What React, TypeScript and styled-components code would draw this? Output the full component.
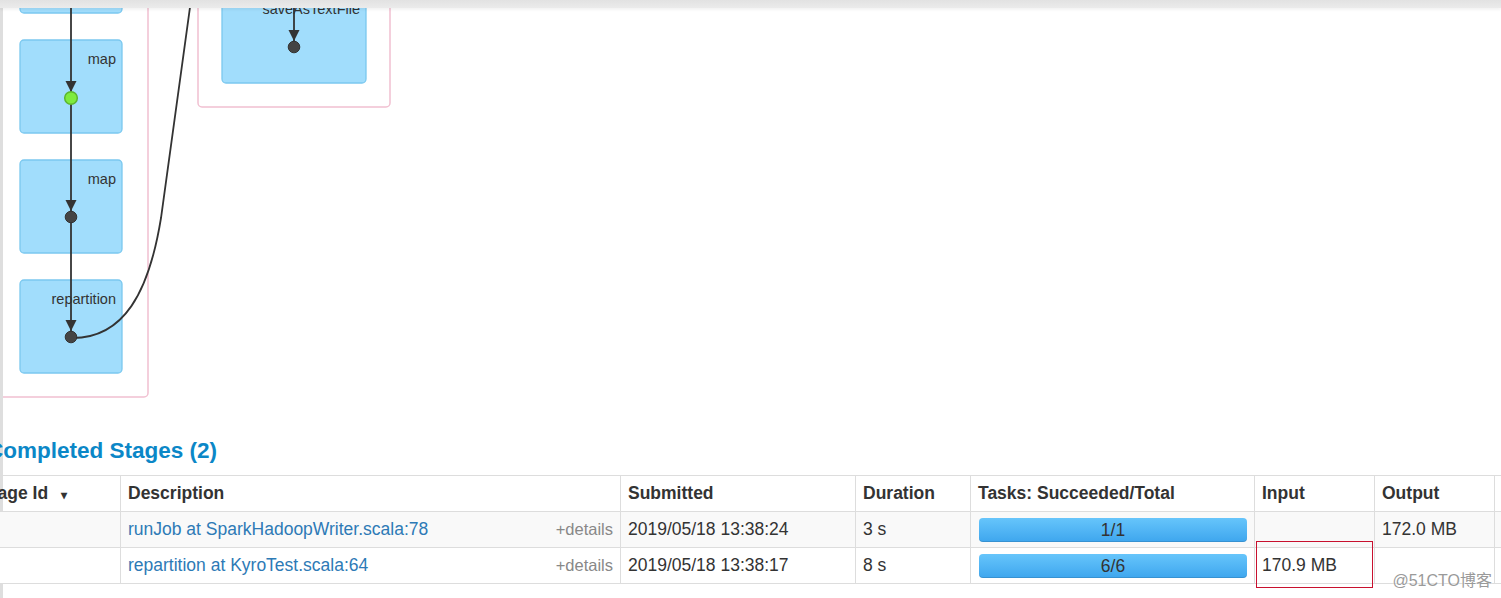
import React from "react"
import styled, { createGlobalStyle } from "styled-components"

const GlobalStyle = createGlobalStyle`
  html, body {
    margin: 0;
    padding: 0;
    background: #fff;
  }
  body {
    font-family: "Liberation Sans", Arial, sans-serif;
    color: #333;
    overflow: hidden;
  }
`

const Frame = styled.div`
  position: relative;
  width: 1501px;
  height: 598px;
  overflow: hidden;
  display: flex;
  flex-direction: column;
  background: #fff;
`

const TopBar = styled.div`
  flex: none;
  position: relative;
  z-index: 1;
  height: 8px;
  background: linear-gradient(#e2e2e2, #ebebeb);
  box-shadow: 0 2px 3px rgba(0, 0, 0, 0.05);
`

const Body = styled.div`
  flex: 1;
  min-height: 0;
  display: flex;
  flex-direction: column;
  border-left: 3px solid #dedede;
`

const DagCanvas = styled.svg`
  display: block;
  flex: none;
  width: 1498px;
  height: 412px;
`

const Heading = styled.h4`
  margin: 18px 0 11px -16px;
  font-size: 22.5px;
  line-height: 26px;
  font-weight: bold;
  color: #0b87c7;
  white-space: nowrap;
`

const TableWrap = styled.div`
  margin-left: -31px;
`

const Table = styled.table`
  border-collapse: collapse;
  table-layout: fixed;
  width: 1642px;
  font-size: 17.5px;
`

const HeadCell = styled.th`
  height: 35px;
  padding: 0 7px;
  border: 1px solid #ddd;
  text-align: left;
  font-weight: bold;
  color: #333;
  white-space: nowrap;
  vertical-align: middle;
`

const Row = styled.tr<{ $striped?: boolean }>`
  background: ${(p) => (p.$striped ? "#f9f9f9" : "#fff")};
`

const Cell = styled.td`
  position: relative;
  height: 35px;
  padding: 0 7px;
  border: 1px solid #ddd;
  color: #333;
  white-space: nowrap;
  vertical-align: middle;
`

const DescLine = styled.div`
  display: flex;
  justify-content: space-between;
  align-items: center;
`

const StageLink = styled.a`
  color: #2d7ab6;
  text-decoration: none;
`

const Details = styled.span`
  font-size: 16.5px;
  color: #888;
`

const SortArrow = styled.span`
  margin-left: 13px;
  font-size: 12px;
  color: #333;
`

const ProgressBar = styled.div`
  height: 24px;
  margin-left: 1px;
  border-radius: 4px;
  background: linear-gradient(#66c5fb, #3ea6ee);
  box-shadow: inset 0 -1px 0 rgba(0, 0, 0, 0.12);
  text-align: center;
  line-height: 24px;
  color: #333;
`

const Highlight = styled.div`
  position: absolute;
  left: 1px;
  top: -7px;
  width: 117px;
  height: 47px;
  box-sizing: border-box;
  border: 1px solid #c8102e;
  pointer-events: none;
`

const Watermark = styled.div`
  position: absolute;
  right: 9px;
  bottom: 7px;
  font-family: "Liberation Sans", "Noto Sans CJK SC", sans-serif;
  font-size: 16px;
  color: #9a9a9a;
  text-shadow: 0 0 2px #fff;
`

const clusters = [
  { x: -20, y: -20, w: 168, h: 417 },
  { x: 198, y: -20, w: 192, h: 127 },
]

const nodes = [
  { x: 20, y: -80, w: 102, h: 93, label: "" },
  { x: 20, y: 40, w: 102, h: 93, label: "map" },
  { x: 20, y: 160, w: 102, h: 93, label: "map" },
  { x: 20, y: 280, w: 102, h: 93, label: "repartition" },
  { x: 222, y: -10, w: 144, h: 93, label: "saveAsTextFile" },
]

const dots = [
  { x: 71, y: 98, green: true },
  { x: 71, y: 217 },
  { x: 71, y: 337 },
  { x: 294, y: 47 },
]

const StageDag: React.FC = () => (
  <DagCanvas viewBox="3 8 1498 412">
    {clusters.map((c, i) => (
      <rect key={i} x={c.x} y={c.y} width={c.w} height={c.h} rx={4}
        fill="#fff" stroke="#f1c0d1" strokeWidth={1.5} />
    ))}
    {nodes.map((n, i) => (
      <g key={i}>
        <rect x={n.x} y={n.y} width={n.w} height={n.h} rx={4}
          fill="#a1ddfc" stroke="#7bc8ef" strokeWidth={1.3} />
        {n.label && (
          <text x={n.x + n.w - 6} y={n.y + 24} textAnchor="end"
            fontSize={14.5} fill="#333" fontFamily="Liberation Sans, Arial, sans-serif">
            {n.label}
          </text>
        )}
      </g>
    ))}
    <line x1={71} y1={-20} x2={71} y2={337} stroke="#333" strokeWidth={1.8} />
    <line x1={294} y1={-10} x2={294} y2={47} stroke="#333" strokeWidth={1.8} />
    <path d="M71,338 C124,339 149,292 161,218 L191,0" fill="none" stroke="#333" strokeWidth={1.8} />
    {dots.map((d, i) => (
      <g key={i}>
        <polygon points={`${d.x - 5.5},${d.y - 17} ${d.x + 5.5},${d.y - 17} ${d.x},${d.y - 6}`} fill="#333" />
        {d.green ? (
          <circle cx={d.x} cy={d.y} r={6.3} fill="#7feb3d" stroke="#5cb52e" strokeWidth={1.5} />
        ) : (
          <circle cx={d.x} cy={d.y} r={5.8} fill="#444" stroke="#333" strokeWidth={1} />
        )}
      </g>
    ))}
  </DagCanvas>
)

const columns = [148, 500, 235, 115, 284, 120, 120, 120]

const stages = [
  { desc: "runJob at SparkHadoopWriter.scala:78", submitted: "2019/05/18 13:38:24", duration: "3 s", tasks: "1/1", input: "", output: "172.0 MB" },
  { desc: "repartition at KyroTest.scala:64", submitted: "2019/05/18 13:38:17", duration: "8 s", tasks: "6/6", input: "170.9 MB", output: "" },
]

export default function App() {
  return (
    <Frame>
      <GlobalStyle />
      <TopBar />
      <Body>
        <StageDag />
        <Heading>Completed Stages (2)</Heading>
        <TableWrap>
          <Table>
            <colgroup>
              {columns.map((w, i) => (
                <col key={i} style={{ width: w }} />
              ))}
            </colgroup>
            <thead>
              <tr>
                <HeadCell>Stage Id<SortArrow>▾</SortArrow></HeadCell>
                <HeadCell>Description</HeadCell>
                <HeadCell>Submitted</HeadCell>
                <HeadCell>Duration</HeadCell>
                <HeadCell>Tasks: Succeeded/Total</HeadCell>
                <HeadCell>Input</HeadCell>
                <HeadCell>Output</HeadCell>
                <HeadCell>Shuffle Read</HeadCell>
              </tr>
            </thead>
            <tbody>
              {stages.map((s, i) => (
                <Row key={i} $striped={i % 2 === 0}>
                  <Cell>{1 - i}</Cell>
                  <Cell>
                    <DescLine>
                      <StageLink href="#">{s.desc}</StageLink>
                      <Details>+details</Details>
                    </DescLine>
                  </Cell>
                  <Cell>{s.submitted}</Cell>
                  <Cell>{s.duration}</Cell>
                  <Cell>
                    <ProgressBar>{s.tasks}</ProgressBar>
                  </Cell>
                  <Cell>
                    {s.input}
                    {s.input && <Highlight />}
                  </Cell>
                  <Cell>{s.output}</Cell>
                  <Cell />
                </Row>
              ))}
            </tbody>
          </Table>
        </TableWrap>
      </Body>
      <Watermark>@51CTO博客</Watermark>
    </Frame>
  )
}
